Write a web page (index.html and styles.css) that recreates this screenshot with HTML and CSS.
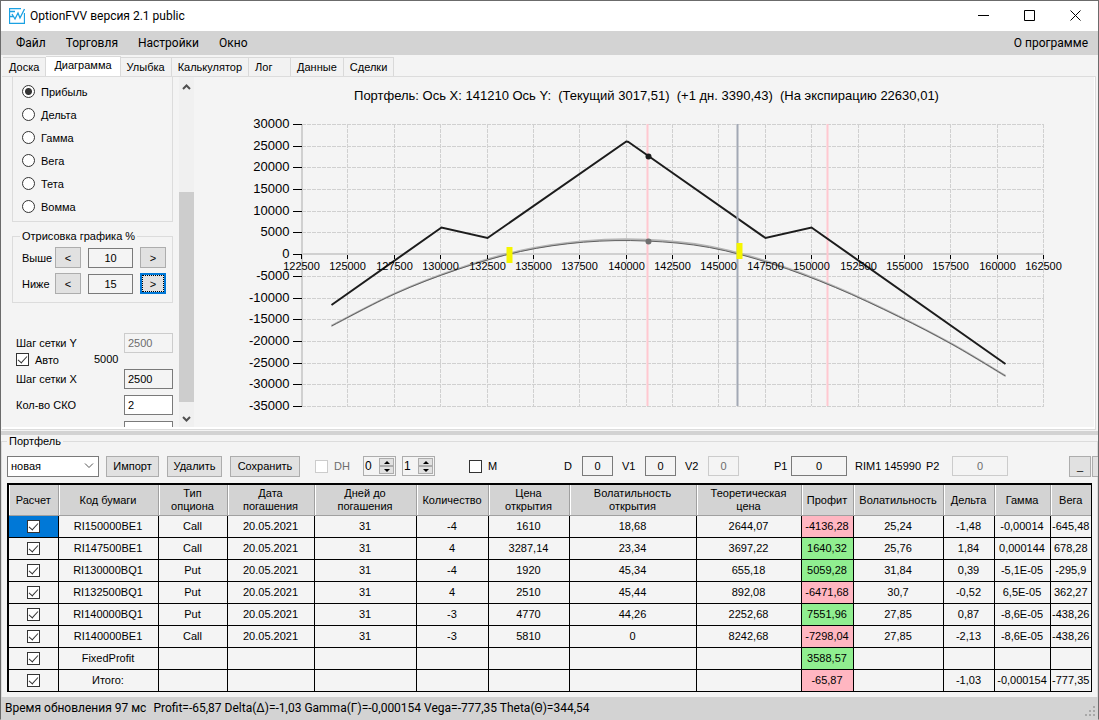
FILE: index.html
```html
<!DOCTYPE html>
<html lang="ru">

<head>
    <meta charset="UTF-8">
    <meta name="viewport" content="width=device-width, initial-scale=1.0">
    <title>OptionFVV версия 2.1 public</title>
    <link rel="stylesheet" href="styles.css">
</head>

<body>
    <header class="titlebar">
        <svg class="logo" width="16" height="16" viewBox="0 0 16 16">
            <path d="M15.500 5V15.500H.5V.5H12" />
            <path d="M1 3.500H6M1 8.500H4M3 6l3 5 3-6 2 5 4.500-9" />
        </svg>
        <h1>OptionFVV версия 2.1 public</h1>
        <div class="window-buttons">
            <button aria-label="Свернуть"><svg width="11" height="11"><path d="M0 5.500H11" /></svg></button>
            <button aria-label="Развернуть"><svg width="11" height="11"><path d="M.5 .5H10.500V10.500H.5Z" /></svg></button>
            <button aria-label="Закрыть"><svg width="11" height="11"><path d="M.5 .5L10.500 10.500M10.500 .5L.5 10.500" /></svg></button>
        </div>
    </header>

    <nav class="menu">
        <a href="#">Файл</a>
        <a href="#">Торговля</a>
        <a href="#">Настройки</a>
        <a href="#">Окно</a>
        <a href="#" class="about">О программе</a>
    </nav>

    <div class="tabs">
        <button>Доска</button>
        <button class="active">Диаграмма</button>
        <button>Улыбка</button>
        <button>Калькулятор</button>
        <button class="log">Лог</button>
        <button>Данные</button>
        <button>Сделки</button>
    </div>

    <main class="page">
        <aside class="settings">
            <div class="kinds">
                <label><input type="radio" name="kind" checked>Прибыль</label>
                <label><input type="radio" name="kind">Дельта</label>
                <label><input type="radio" name="kind">Гамма</label>
                <label><input type="radio" name="kind">Вега</label>
                <label><input type="radio" name="kind">Тета</label>
                <label><input type="radio" name="kind">Вомма</label>
            </div>
            <fieldset class="range">
                <legend>Отрисовка графика %</legend>
                <div class="range-row">
                    <label for="above">Выше</label>
                    <button>&lt;</button>
                    <input type="text" id="above" value="10" readonly>
                    <button>&gt;</button>
                </div>
                <div class="range-row">
                    <label for="below">Ниже</label>
                    <button>&lt;</button>
                    <input type="text" id="below" value="15" readonly>
                    <button class="focused">&gt;</button>
                </div>
            </fieldset>
            <div class="grid-steps">
                <div class="step"><label for="stepY">Шаг сетки Y</label><input type="text" id="stepY" value="2500" disabled></div>
                <div class="auto"><label><input type="checkbox" checked>Авто</label><span>5000</span></div>
                <div class="step"><label for="stepX">Шаг сетки X</label><input type="text" id="stepX" value="2500" readonly></div>
                <div class="step spaced"><label for="sko">Кол-во СКО</label><input type="text" id="sko" value="2"></div>
                <div class="step spaced"><label for="days">К</label><input type="text" id="days" value="1"></div>
            </div>
        </aside>
        <div class="scrollbar">
            <button aria-label="Вверх"><svg width="9" height="6" viewBox="0 0 9 6"><path d="M1 5l3.500-3.500L8 5" /></svg></button>
            <div class="thumb"></div>
            <button aria-label="Вниз"><svg width="9" height="6" viewBox="0 0 9 6"><path d="M1 1l3.500 3.500L8 1" /></svg></button>
        </div>
        <div class="chart">
            <svg id="chart" viewBox="0 0 900 350"></svg>
        </div>
    </main>

    <div class="splitter"></div>

    <fieldset class="portfolio">
        <legend>Портфель</legend>
        <div class="toolbar">
            <select aria-label="Портфель">
                <option>новая</option>
            </select>
            <button class="import">Импорт</button>
            <button class="delete">Удалить</button>
            <button class="save">Сохранить</button>
            <label class="check off"><input type="checkbox" disabled>DH</label>
            <span class="spinner">
                <input type="text" value="0" aria-label="DH от">
                <span><button class="up" aria-label="Больше"></button><button class="down" aria-label="Меньше"></button></span>
            </span>
            <span class="spinner">
                <input type="text" value="1" aria-label="DH до">
                <span><button class="up" aria-label="Больше"></button><button class="down" aria-label="Меньше"></button></span>
            </span>
            <label class="check hedge"><input type="checkbox">M</label>
            <div class="fields">
                <label for="d">D</label><input type="text" id="d" value="0">
                <label for="v1">V1</label><input type="text" id="v1" value="0">
                <label for="v2">V2</label><input type="text" id="v2" value="0" disabled>
            </div>
            <div class="prices">
                <label for="p1">P1</label><input type="text" id="p1" value="0">
                <span>RIM1 145990</span>
                <label for="p2">P2</label><input type="text" id="p2" value="0" disabled>
            </div>
            <div class="fold">
                <button>_</button>
                <button aria-label="Ещё"></button>
            </div>
        </div>
        <div class="table-box">
            <table>
                <colgroup>
                    <col class="w-calc"><col class="w-code"><col class="w-type"><col class="w-date"><col class="w-days">
                    <col class="w-count"><col class="w-open"><col class="w-volopen"><col class="w-theor"><col class="w-profit">
                    <col class="w-vol"><col class="w-delta"><col class="w-gamma"><col>
                </colgroup>
                <thead>
                    <tr>
                        <th>Расчет</th>
                        <th>Код бумаги</th>
                        <th>Тип<br>опциона</th>
                        <th>Дата<br>погашения</th>
                        <th>Дней до<br>погашения</th>
                        <th>Количество</th>
                        <th>Цена<br>открытия</th>
                        <th>Волатильность<br>открытия</th>
                        <th>Теоретическая<br>цена</th>
                        <th>Профит</th>
                        <th>Волатильность</th>
                        <th>Дельта</th>
                        <th>Гамма</th>
                        <th>Вега</th>
                    </tr>
                </thead>
                <tbody id="rows"></tbody>
            </table>
        </div>
    </fieldset>

    <footer class="status">
        <span>Время обновления 97 мс</span>
        <span>Profit=-65,87 Delta(Δ)=-1,03 Gamma(Г)=-0,000154 Vega=-777,35 Theta(Θ)=344,54</span>
        <svg class="grip" width="11" height="11" viewBox="0 0 11 11">
            <path d="M8 0h2v2h-2zM8 4h2v2h-2zM4 4h2v2h-2zM8 8h2v2h-2zM4 8h2v2h-2zM0 8h2v2h-2z" />
        </svg>
    </footer>

    <script>
        // Portfolio table
        const rows = [
            ["RI150000BE1", "Call", "20.05.2021", "31", "-4", "1610", "18,68", "2644,07", "-4136,28", "25,24", "-1,48", "-0,00014", "-645,48"],
            ["RI147500BE1", "Call", "20.05.2021", "31", "4", "3287,14", "23,34", "3697,22", "1640,32", "25,76", "1,84", "0,000144", "678,28"],
            ["RI130000BQ1", "Put", "20.05.2021", "31", "-4", "1920", "45,34", "655,18", "5059,28", "31,84", "0,39", "-5,1E-05", "-295,9"],
            ["RI132500BQ1", "Put", "20.05.2021", "31", "4", "2510", "45,44", "892,08", "-6471,68", "30,7", "-0,52", "6,5E-05", "362,27"],
            ["RI140000BQ1", "Put", "20.05.2021", "31", "-3", "4770", "44,26", "2252,68", "7551,96", "27,85", "0,87", "-8,6E-05", "-438,26"],
            ["RI140000BE1", "Call", "20.05.2021", "31", "-3", "5810", "0", "8242,68", "-7298,04", "27,85", "-2,13", "-8,6E-05", "-438,26"],
            ["FixedProfit", "", "", "", "", "", "", "", "3588,57", "", "", "", ""],
            ["Итого:", "", "", "", "", "", "", "", "-65,87", "", "-1,03", "-0,000154", "-777,35"]
        ];

        document.getElementById("rows").innerHTML = rows.map((row, r) => {
            const cells = row.map((text, i) => {
                const cls = i === 8 ? (text[0] === "-" ? "loss" : "gain") : "";
                return `<td class="${cls}">${text}</td>`;
            }).join("");
            const box = `<input type="checkbox" checked aria-label="${row[0]}">`;
            return `<tr><td class="${r === 0 ? "selected" : ""}">${box}</td>${cells}</tr>`;
        }).join("");

        // Chart
        const left = 107, right = 849, top0 = 47, bottom = 329;
        const px = v => Math.round(left + (v - 122500) / 40000 * (right - left));
        const py = v => Math.round(top0 + (30000 - v) / 65000 * (bottom - top0));
        let svg = "";

        for (let v = 122500; v <= 162500; v += 2500) {
            svg += `<path class="grid" d="M${px(v)} ${top0}V${bottom}"/>`;
        }
        for (let v = -35000; v <= 30000; v += 5000) {
            svg += `<path class="grid" d="M${left} ${py(v)}H${right}"/>`;
        }
        svg += `<path class="axis" d="M${left} ${top0}V${bottom}M${left} ${py(0)}H${right}"/>`;
        for (let v = -35000; v <= 30000; v += 5000) {
            svg += `<path class="tick" d="M98 ${py(v)}H${left}"/>`;
            svg += `<text class="y-label" x="95" y="${py(v) + 4}">${v}</text>`;
        }

        // Smooth line through the points
        function curve(points) {
            let d = "M" + points[0];
            for (let i = 0; i < points.length - 1; i++) {
                const a = points[i - 1] || points[i];
                const b = points[i];
                const c = points[i + 1];
                const e = points[i + 2] || c;
                d += `C${b[0] + (c[0] - a[0]) / 6},${b[1] + (c[1] - a[1]) / 6} ${c[0] - (e[0] - b[0]) / 6},${c[1] - (e[1] - b[1]) / 6} ${c}`;
            }
            return d;
        }
        const now = [[137, 249], [200, 217], [263, 192.5], [326, 174.5], [389, 165.2], [452, 164], [515, 170.5], [578, 187], [641, 210.5], [704, 239.5], [757, 267], [811, 299]];
        const next = now.map(([x, y]) => [x, y - 1.2 * (1 - Math.abs(x - 454) / 400)]);

        svg += `<path class="sigma" d="M453 ${top0}V${bottom}M633 ${top0}V${bottom}"/>`;
        svg += `<path class="next" d="${curve(next)}"/>`;
        svg += `<path class="now" d="${curve(now)}"/>`;
        svg += `<path class="expiry" d="M137 228L247 150.500L293 161L431 65Q432 64 434 65L571 161L617 150.500L811 287"/>`;
        svg += `<path class="price" d="M543 ${top0}V${bottom}"/>`;
        svg += `<circle class="dot" cx="454" cy="79.500" r="3"/><circle class="dot pale" cx="454" cy="164.500" r="3"/>`;
        for (let v = 122500; v <= 162500; v += 2500) {
            svg += `<path class="tick" d="M${px(v)} ${py(0) + 1}v4"/>`;
            svg += `<text class="x-label" x="${px(v)}" y="193">${v}</text>`;
        }
        svg += `<rect class="zero" x="312" y="170" width="6" height="16"/><rect class="zero" x="542" y="166" width="6" height="16"/>`;
        svg += `<text class="chart-title" x="452" y="23">Портфель: Ось X: 141210 Ось Y:  (Текущий 3017,51)  (+1 дн. 3390,43)  (На экспирацию 22630,01)</text>`;
        document.getElementById("chart").innerHTML = svg;
    </script>
</body>

</html>
```

FILE: styles.css
```css
* {
    box-sizing: border-box;
}

body {
    margin: 0;
    min-height: 100vh;
    display: flex;
    flex-direction: column;
    border: 1px solid #6b6b6b;
    border-bottom-color: #d3d3d3;
    background-color: #f4f4f4;
    color: #000;
    font-family: "Liberation Sans", Arial, sans-serif;
    font-size: 11px;
    overflow: hidden;
}

button,
input,
select {
    font: inherit;
    color: inherit;
    margin: 0;
    padding: 0;
    border-radius: 0;
}

a {
    color: inherit;
    text-decoration: none;
}

/* Title and menu */
.titlebar {
    display: flex;
    align-items: center;
    height: 30px;
    padding-left: 8px;
    background-color: #fff;
}

.titlebar h1 {
    flex: 1;
    margin: 0 0 0 5px;
    font: 12px Roboto, sans-serif;
}

.logo path {
    fill: none;
    stroke: #1ba1e2;
    stroke-width: 1.3;
}

.window-buttons {
    display: flex;
}

.window-buttons button {
    width: 46px;
    height: 30px;
    border: none;
    background: none;
}

.window-buttons path {
    fill: none;
    stroke: #000;
}

.menu {
    display: flex;
    align-items: center;
    gap: 20px;
    height: 24px;
    padding: 0 10px 0 15px;
    background-color: #d3d3d3;
    font: 12px Roboto, sans-serif;
}

.about {
    margin-left: auto;
}

/* Tabs */
.tabs {
    display: flex;
    align-items: flex-end;
    height: 21px;
    padding-left: 2px;
}

.tabs button {
    height: 19px;
    padding: 0 6px;
    border: 1px solid #d9d9d9;
    border-left: none;
    border-bottom: none;
    background-color: #f2f2f2;
}

.tabs .active {
    height: 20px;
    padding: 0 8px 3px;
    background-color: #fff;
}

.tabs .log {
    width: 42px;
    text-align: left;
}

.page {
    display: flex;
    height: 354px;
    margin: 0 2px 0 1px;
    padding-left: 3px;
    border: 1px solid #dcdcdc;
    border-left: none;
    box-shadow: inset 0 -2px #fff, inset -1px 0 #fff;
}

.splitter {
    height: 4px;
    margin-top: 1px;
    background-color: #d3d3d3;
}

/* Left panel */
.settings {
    width: 174px;
    height: 350px;
    overflow: hidden;
    padding: 0 6px 0 7px;
}

.kinds {
    height: 145px;
    padding: 3px 0 0 9px;
    border: 1px solid #dcdcdc;
    border-top: none;
}

.kinds label {
    display: flex;
    align-items: center;
    gap: 6px;
    height: 23px;
}

input[type="radio"] {
    appearance: none;
    width: 13px;
    height: 13px;
    border: 1px solid #333;
    border-radius: 50%;
    background-color: #fff;
}

input[type="radio"]:checked {
    background: radial-gradient(circle, #333 3px, #fff 4px);
}

fieldset {
    margin: 0;
    min-width: 0;
    border: 1px solid #dcdcdc;
}

legend {
    padding: 0 2px;
}

.range {
    height: 73px;
    margin-top: 8px;
    padding: 5px 0 0 9px;
}

.range legend {
    margin-left: -2px;
}

.range-row {
    display: flex;
    align-items: center;
    height: 21px;
    margin-bottom: 5px;
}

.range-row label {
    width: 33px;
}

.range-row button {
    width: 26px;
    height: 21px;
}

.range-row input {
    width: 45px;
    height: 20px;
    margin: 0 7px;
    text-align: center;
}

button {
    border: 1px solid #adadad;
    background-color: #e1e1e1;
}

.range-row .focused {
    border: 2px solid #0078d7;
    outline: 1px dotted #000;
    outline-offset: -3px;
}

input[type="text"] {
    border: 1px solid #7a7a7a;
    background-color: #f4f4f4;
}

input[type="text"]:disabled {
    border-color: #ccc;
    color: #6d6d6d;
}

input[type="checkbox"] {
    appearance: none;
    width: 13px;
    height: 13px;
    border: 1px solid #333;
    background-color: #fff;
}

input[type="checkbox"]:checked::after {
    content: "";
    display: block;
    width: 4px;
    height: 8px;
    margin: 0 auto;
    border: solid #333;
    border-width: 0 1px 1px 0;
    transform: rotate(42deg);
}

input[type="checkbox"]:disabled {
    border-color: #ccc;
}

.grid-steps {
    padding: 30px 0 0 4px;
}

.step {
    display: flex;
    justify-content: space-between;
    align-items: center;
    height: 20px;
}

.step.spaced {
    margin-top: 6px;
}

.step input {
    width: 49px;
    height: 20px;
    padding-left: 3px;
}

#sko,
#days {
    background-color: #fff;
}

.auto {
    display: flex;
    height: 16px;
    align-items: flex-start;
}

.auto label {
    display: flex;
    align-items: center;
    gap: 6px;
    width: 78px;
}

.scrollbar {
    display: flex;
    flex-direction: column;
    width: 15px;
    height: 350px;
    background-color: #f0f0f0;
}

.scrollbar button {
    height: 18px;
    border: none;
    background: none;
}

.scrollbar path {
    fill: none;
    stroke: #505050;
    stroke-width: 2;
}

.thumb {
    height: 210px;
    margin: auto 0 7px;
    background-color: #cdcdcd;
}

/* Chart */
.chart {
    flex: 1;
    min-width: 0;
}

.chart svg {
    display: block;
    width: 100%;
    height: 350px;
}

.grid {
    stroke: #d0d0d0;
    stroke-dasharray: 4 1;
    shape-rendering: crispEdges;
}

.axis {
    fill: none;
    stroke: #d0d0d0;
    stroke-width: 2;
    shape-rendering: crispEdges;
}

.tick {
    stroke: #000;
    shape-rendering: crispEdges;
}

.y-label {
    font-size: 13px;
    text-anchor: end;
}

.x-label {
    font-size: 11px;
    text-anchor: middle;
}

.chart-title {
    font-size: 13px;
    text-anchor: middle;
    white-space: pre;
}

.sigma {
    stroke: #ffc8d0;
    stroke-width: 2;
}

.price {
    stroke: #a2a8b4;
    stroke-width: 2;
}

.expiry {
    fill: none;
    stroke: #1c1c1c;
    stroke-width: 2;
}

.now {
    fill: none;
    stroke: #606060;
}

.next {
    fill: none;
    stroke: #b4b4b4;
    stroke-width: 2;
}

.dot {
    fill: #1c1c1c;
}

.dot.pale {
    fill: #707070;
}

.zero {
    fill: #f5f500;
}

/* Portfolio */
.portfolio {
    flex: 1;
    display: flex;
    flex-direction: column;
    padding: 8px 5px 0;
    border-bottom: none;
}

.portfolio legend {
    height: 12px;
    line-height: 12px;
}

.toolbar {
    display: flex;
    align-items: center;
    height: 22px;
    margin-right: -6px;
}

.toolbar select {
    appearance: none;
    width: 92px;
    height: 21px;
    padding-left: 3px;
    border: 1px solid #7a7a7a;
    background: #fff url("data:image/svg+xml,%3Csvg xmlns='http://www.w3.org/2000/svg' width='10' height='6'%3E%3Cpath d='M1 .5l4 4 4-4' fill='none' stroke='%23555'/%3E%3C/svg%3E") no-repeat right 4px center;
}

.toolbar button {
    height: 21px;
    margin-left: 8px;
}

.toolbar .import {
    width: 53px;
    margin-left: 7px;
}

.toolbar .delete {
    width: 55px;
}

.toolbar .save {
    width: 70px;
}

.check {
    display: flex;
    align-items: center;
    gap: 6px;
    margin-left: 15px;
}

.check.off {
    width: 42px;
    color: #6d6d6d;
}

.check.hedge {
    width: 61px;
    margin-left: 34px;
}

.spinner {
    display: flex;
    width: 33px;
    height: 20px;
    padding: 1px;
    border: 1px solid #adadad;
    margin-left: 6px;
}

.spinner input[type="text"] {
    flex: 1;
    min-width: 0;
    border: none;
    font-size: 12px;
}

.spinner span {
    display: flex;
    flex-direction: column;
    width: 15px;
}

.spinner button {
    display: flex;
    align-items: center;
    justify-content: center;
    height: 8px;
    margin: 0;
}

.up::after,
.down::after {
    content: "";
    border: 3px solid transparent;
    border-top: none;
    border-bottom-color: #000;
}

.down::after {
    transform: rotate(180deg);
}

.fields,
.prices {
    display: flex;
    align-items: center;
    margin-left: 34px;
}

.fields input {
    width: 31px;
    height: 20px;
    margin-right: 9px;
    text-align: center;
}

.fields label {
    width: 23px;
}

.fields label:first-child {
    width: 18px;
}

.prices {
    margin-left: 26px;
}

.prices label {
    width: 17px;
}

.prices span {
    width: 71px;
}

.prices input {
    width: 56px;
    height: 20px;
    margin-right: 8px;
    text-align: center;
}

#p2 {
    margin-left: 9px;
}

.fold {
    display: flex;
    gap: 1px;
    margin-left: auto;
}

.fold button {
    width: 22px;
    margin: 0;
}

.fold button:last-child {
    width: 6px;
    border-right: none;
}

.table-box {
    flex: 1;
    margin-top: 6px;
    border: 1px solid #000;
    border-width: 2px 1px 0 2px;
    overflow: hidden;
}

table {
    width: 100%;
    table-layout: fixed;
    border-collapse: collapse;
}

th {
    height: 30px;
    padding: 1px 0 0;
    border-right: 1px solid #a0a0a0;
    border-bottom: 1px solid #a0a0a0;
    background-color: #d3d3d3;
    box-shadow: inset 1px 0 #fff;
    font-weight: normal;
    line-height: 13px;
    white-space: nowrap;
}

td {
    height: 22px;
    padding: 0;
    border: 1px solid #000;
    border-left: none;
    text-align: center;
    white-space: nowrap;
}

th:last-child,
td:last-child {
    border-right: none;
}

thead + tbody tr:first-child td {
    border-top: none;
}

td input {
    display: block;
    margin: 0 auto !important;
}

.selected {
    background-color: #0078d7;
}

.loss {
    background-color: #ffb6c1;
}

.gain {
    background-color: #90ee90;
}

.w-calc { width: 49px; }
.w-code { width: 100px; }
.w-type { width: 69px; }
.w-date { width: 87px; }
.w-days { width: 102px; }
.w-count { width: 72px; }
.w-open { width: 81px; }
.w-volopen { width: 127px; }
.w-theor { width: 105px; }
.w-profit { width: 52px; }
.w-vol { width: 90px; }
.w-delta { width: 51px; }
.w-gamma { width: 56px; }

.status {
    display: flex;
    align-items: center;
    gap: 7px;
    height: 22px;
    padding-left: 4px;
    background-color: #d3d3d3;
    font: 12px Roboto, sans-serif;
}

.grip {
    margin: 6px 2px 0 auto;
    fill: #a8a8a8;
}
```
